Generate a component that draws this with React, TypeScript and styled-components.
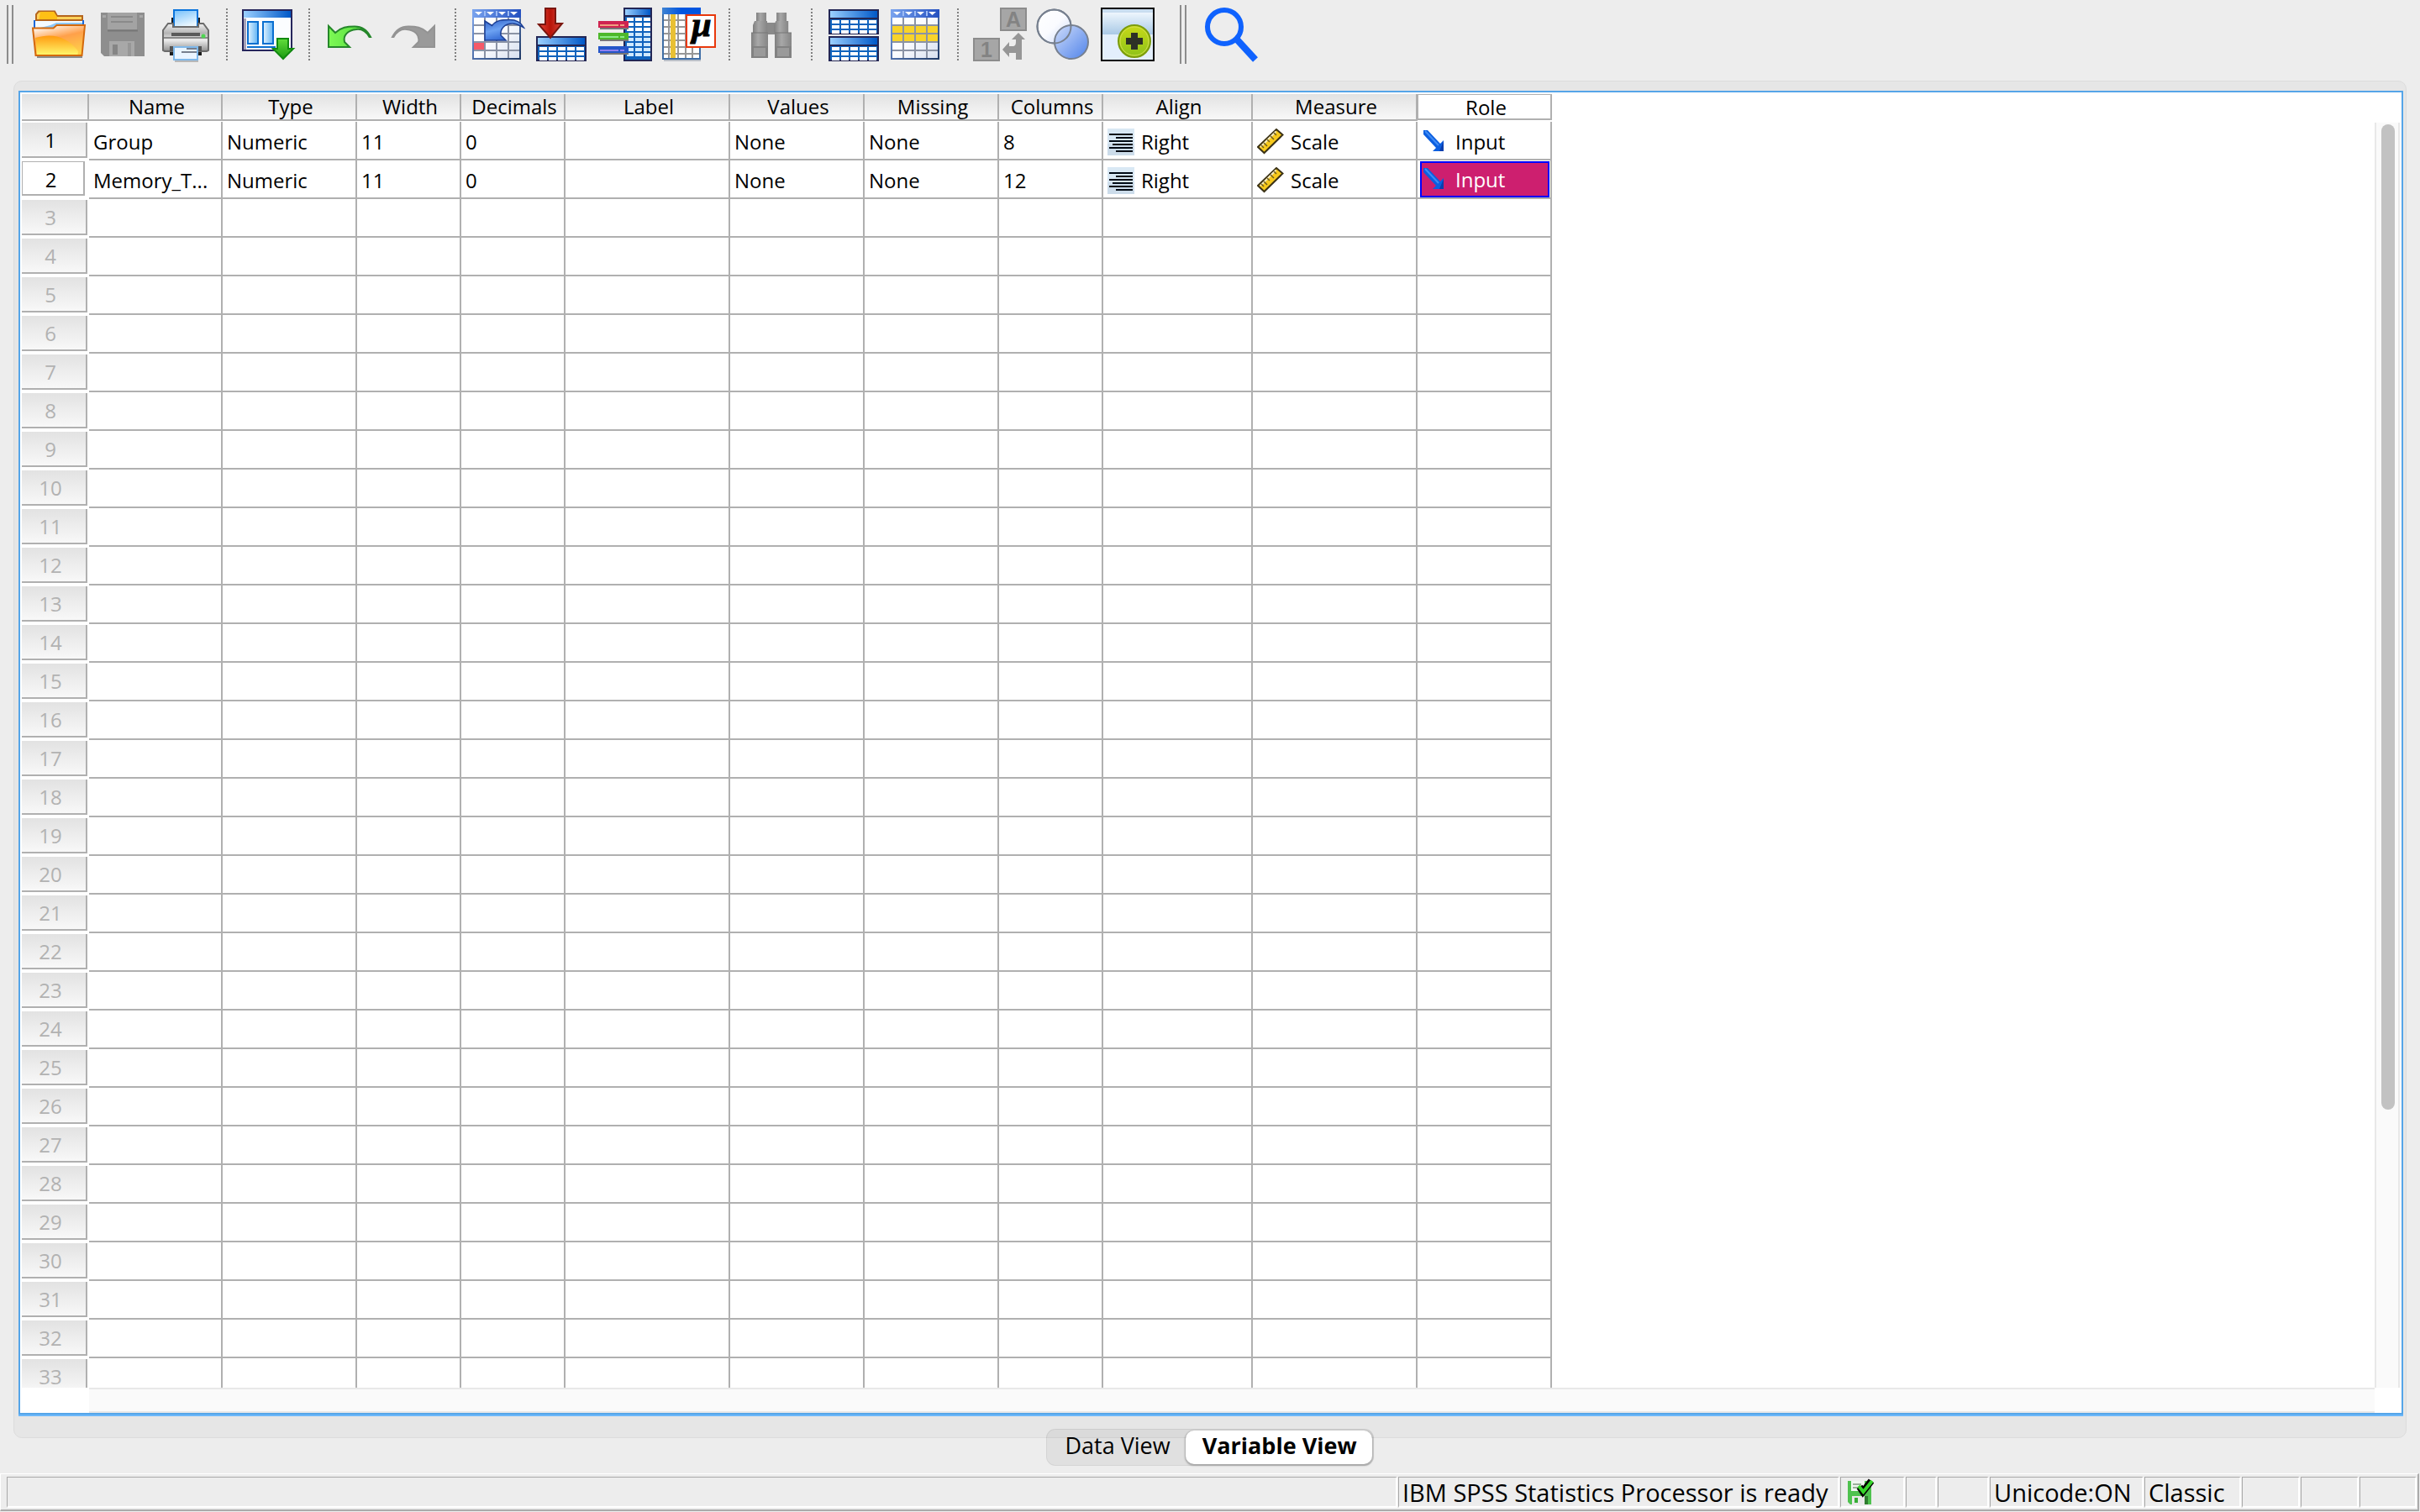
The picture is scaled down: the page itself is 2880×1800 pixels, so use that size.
import React, { useState } from "react";
import styled, { createGlobalStyle, css } from "styled-components";

const line = "#b0b0b0";
const fontStack = '"Open Sans", "Noto Sans", sans-serif';

const GlobalStyle = createGlobalStyle`
  *, *::before, *::after { box-sizing: border-box; }
  body { margin: 0; background: #ededed; color: #000; font-family: ${fontStack}; }
  button { font-family: inherit; }
`;

const Window = styled.div`
  display: flex;
  flex-direction: column;
  height: 100vh;
  overflow: hidden;
`;

/* ---------- toolbar ---------- */

const Toolbar = styled.div`
  display: flex;
  align-items: center;
  gap: 12px;
  padding: 6px 8px 20px;
`;

const Grip = styled.div<{ $inner?: boolean }>`
  width: 8px;
  height: 70px;
  margin-right: 10px;
  margin-left: ${(p) => (p.$inner ? "18px" : "0")};
  border: solid #8c8c8c;
  border-width: 0 2px;
`;

const Separator = styled.div`
  width: 2px;
  height: 62px;
  margin: 0 5px 0 3px;
  background: repeating-linear-gradient(#808080 0 2px, transparent 2px 4px);
`;

const ToolButton = styled.button`
  width: 64px;
  height: 64px;
  padding: 0;
  border: 0;
  background: none;
  svg { display: block; overflow: visible; }
`;

/* ---------- editor panel ---------- */

const Panel = styled.main`
  flex: 1;
  min-height: 0;
  display: flex;
  margin: 0 16px;
  padding: 11px 3px 27px 5px;
  border: 1px solid #dcdcdc;
  border-radius: 10px;
  background: #e6e6e6;
`;

const Frame = styled.div`
  flex: 1;
  display: flex;
  flex-direction: column;
  min-width: 0;
  padding: 0 2px;
  border: 2px solid #55a5e8;
  box-shadow: 0 2px 0 #6cb8fa;
  background: #fff;
`;

const GridRow = styled.div`
  flex: 1;
  display: flex;
  min-height: 0;
`;

const GridArea = styled.div`
  flex: 1;
  min-width: 0;
  padding-top: 2px;
  overflow: hidden;
`;

const VerticalTrack = styled.div`
  width: 30px;
  margin-top: 36px;
  padding: 2px 4px 0 6px;
  border: solid #e8e8e8;
  border-width: 0 2px;
  background: #fafafa;
`;

const Thumb = styled.div`
  height: 78%;
  border-radius: 8px;
  background: #c2c2c2;
`;

const HorizontalTrack = styled.div`
  height: 30px;
  margin: 0 30px 0 80px;
  border: solid #e8e8e8;
  border-width: 2px 0;
  background: #fafafa;
`;

const Table = styled.table`
  width: 1821px;
  table-layout: fixed;
  border-collapse: separate;
  border-spacing: 0;
  font-size: 24px;
  line-height: 30px;
`;

const headerFill = css`
  background: linear-gradient(#e2e2e2, #ececec 45%, #f8f8f8);
`;

const ColumnHeader = styled.th`
  height: 33px;
  padding: 0 0 1px;
  font-weight: 400;
  text-align: center;
  vertical-align: top;
`;

const ColumnLabel = styled.div<{ $active?: boolean }>`
  height: 32px;
  padding-left: 4px;
  border: solid ${line};
  border-width: 0 2px 2px 0;
  ${headerFill}
  ${(p) =>
    p.$active &&
    css`
      height: 31px;
      border-width: 1px 2px 2px 1px;
      background: #fff;
    `}
`;

const RowHeader = styled.th`
  height: 46px;
  padding: 1px 2px 3px 0;
  font-weight: 400;
  vertical-align: top;
`;

const RowLabel = styled.div<{ $filled: boolean; $active: boolean }>`
  height: 42px;
  padding: 6px 8px 0 0;
  border: solid ${line};
  border-width: 0 2px 2px 0;
  color: ${(p) => (p.$filled ? "#000" : "#b2b2b2")};
  ${headerFill}
  ${(p) =>
    p.$active &&
    css`
      height: 41px;
      margin-right: 3px;
      padding-right: 5px;
      border-width: 1px 2px 2px 1px;
      background: #fff;
    `}
`;

const Cell = styled.td`
  height: 46px;
  padding: 0;
  border: solid ${line};
  border-width: 0 2px 2px 0;
`;

const CellContent = styled.div<{ $selected?: boolean }>`
  display: flex;
  align-items: center;
  gap: 8px;
  height: 44px;
  padding: 3px 0 0 5px;
  white-space: nowrap;
  svg { flex: none; }
  ${(p) =>
    p.$selected &&
    css`
      height: 43px;
      margin: 1px 1px 0 3px;
      padding: 1px 0 0;
      border: 2px solid #0000ff;
      background: #cd1f6f;
      color: #fff;
    `}
`;

/* ---------- view tabs ---------- */

const Tabs = styled.div`
  position: relative;
  display: flex;
  align-self: center;
  margin: -11px 0 9px;
  padding: 1px;
  border: 1px solid rgba(0, 0, 0, 0.06);
  border-radius: 11px;
  background: rgba(0, 0, 0, 0.05);
`;

const Tab = styled.button<{ $active: boolean }>`
  height: 40px;
  padding: 0 18px 4px 20px;
  border: 0;
  border-radius: 10px;
  background: none;
  font-size: 27px;
  line-height: 36px;
  color: #000;
  ${(p) =>
    p.$active &&
    css`
      background: #fff;
      font-weight: 700;
      box-shadow: 0 1px 2px 1px rgba(0, 0, 0, 0.25);
    `}
`;

/* ---------- status bar ---------- */

const StatusBar = styled.footer`
  display: flex;
  gap: 1px;
  margin: 0 1px 1px 0;
  padding: 3px 1px 2px 7px;
  border: solid;
  border-width: 1px 2px 2px 1px;
  border-color: #fff #ababab #ababab #fff;
`;

const StatusCell = styled.div<{ $width?: number }>`
  ${(p) => (p.$width ? `width: ${p.$width}px;` : "flex: 1;")}
  height: 37px;
  padding: 0 0 0 4px;
  border: solid;
  border-width: 1px 2px 2px 1px;
  border-color: #a9a9a9 #fff #fff #a9a9a9;
  font-size: 29px;
  line-height: 36px;
  white-space: nowrap;
  svg { display: block; margin: 1px 0 0 3px; }
`;

/* ---------- toolbar icons ---------- */

const Svg = ({ children }: { children: React.ReactNode }) => (
  <svg width="64" height="64" viewBox="0 0 64 64" aria-hidden="true">
    {children}
  </svg>
);

const range = (n: number) => Array.from({ length: n }, (_, i) => i);

const WhiteCells = ({ x, y, cols, rows, w, h, gx, gy }: { x: number; y: number; cols: number; rows: number; w: number; h: number; gx: number; gy: number }) => (
  <>
    {range(rows).map((r) =>
      range(cols).map((c) => (
        <rect key={`${r}-${c}`} x={x + c * (w + gx)} y={y + r * (h + gy)} width={w} height={h} fill={r > 2 ? "#cfe9ff" : "#fff"} />
      ))
    )}
  </>
);

const DefsHolder = styled.svg`
  position: absolute;
`;

const SharedDefs = () => (
  <DefsHolder width="0" height="0" aria-hidden="true">
    <defs>
      <linearGradient id="blueBar"><stop offset="0" stopColor="#9bd0ff" /><stop offset="1" stopColor="#0058c8" /></linearGradient>
      <linearGradient id="folderFront" x1="0.2" y1="0" x2="0.6" y2="1"><stop offset="0" stopColor="#fff" /><stop offset="0.45" stopColor="#ffa04a" /><stop offset="1" stopColor="#ffd04a" /></linearGradient>
      <linearGradient id="folderGlow" x1="0" y1="0" x2="0" y2="1"><stop offset="0" stopColor="#ff9a10" /><stop offset="1" stopColor="#fff56a" /></linearGradient>
      <linearGradient id="paperBlue" x1="0" y1="0" x2="0.4" y2="1"><stop offset="0" stopColor="#74c0fb" /><stop offset="1" stopColor="#eaf7ff" /></linearGradient>
      <linearGradient id="metal" x1="0" y1="0" x2="0" y2="1"><stop offset="0" stopColor="#efefef" /><stop offset="0.35" stopColor="#b4b4b4" /><stop offset="0.6" stopColor="#ececec" /><stop offset="1" stopColor="#8f8f8f" /></linearGradient>
      <linearGradient id="pane"><stop offset="0" stopColor="#e3f4ff" /><stop offset="1" stopColor="#5fb2f4" /></linearGradient>
      <linearGradient id="greenArrow" x1="0" y1="0" x2="0" y2="1"><stop offset="0" stopColor="#62dd3c" /><stop offset="1" stopColor="#1b9a10" /></linearGradient>
      <linearGradient id="undoGreen"><stop offset="0" stopColor="#7dfa55" /><stop offset="1" stopColor="#4fd43a" /></linearGradient>
      <linearGradient id="caseHeader" x1="0" y1="0" x2="1" y2="0"><stop offset="0" stopColor="#79a3ee" /><stop offset="1" stopColor="#2450c0" /></linearGradient>
      <linearGradient id="caseFrame" x1="0" y1="0" x2="1" y2="1"><stop offset="0" stopColor="#7ea6ee" /><stop offset="1" stopColor="#203a66" /></linearGradient>
      <linearGradient id="caseBody" x1="0" y1="0" x2="1" y2="1"><stop offset="0" stopColor="#fff" /><stop offset="0.5" stopColor="#fbfcff" /><stop offset="1" stopColor="#d7dfef" /></linearGradient>
      <linearGradient id="blueArrow" x1="0" y1="0" x2="0.5" y2="1"><stop offset="0" stopColor="#2d5fc8" /><stop offset="0.5" stopColor="#6da2f2" /><stop offset="1" stopColor="#2c62cf" /></linearGradient>
      <linearGradient id="redArrow"><stop offset="0" stopColor="#e8473a" /><stop offset="0.5" stopColor="#b81408" /><stop offset="1" stopColor="#d9463c" /></linearGradient>
      <linearGradient id="muHeader"><stop offset="0" stopColor="#3f83d2" /><stop offset="0.5" stopColor="#0055e0" /><stop offset="1" stopColor="#0055e0" /></linearGradient>
      <linearGradient id="grayTube"><stop offset="0" stopColor="#7f7f7f" /><stop offset="0.4" stopColor="#a8a8a8" /><stop offset="1" stopColor="#858585" /></linearGradient>
      <linearGradient id="venn1" x1="0" y1="0" x2="1" y2="1"><stop offset="0" stopColor="#fff" /><stop offset="0.5" stopColor="#fafbff" /><stop offset="1" stopColor="#c9d8f8" /></linearGradient>
      <linearGradient id="venn2" x1="0" y1="0" x2="1" y2="1"><stop offset="0" stopColor="#cfdcfa" /><stop offset="1" stopColor="#4f83ea" /></linearGradient>
      <linearGradient id="sky" x1="0" y1="0" x2="0" y2="1"><stop offset="0" stopColor="#eef6fd" /><stop offset="1" stopColor="#a9c9e6" /></linearGradient>
      <linearGradient id="lime" x1="0" y1="0" x2="0" y2="1"><stop offset="0" stopColor="#c8d918" /><stop offset="1" stopColor="#8dc21a" /></linearGradient>
    </defs>
  </DefsHolder>
);

const OpenIcon = () => (
  <Svg>
    <path d="M6 59h54" stroke="#8c8c8c" strokeWidth="2" />
    <path d="M5 30V8l3-3.500h19l3 5.500h30v14" fill="#ffd25a" stroke="#b5651d" strokeWidth="2" />
    <path d="M10 5h16l4 6v5H8z" fill="#ffc016" />
    <path d="M3 15v14M61 15v14" stroke="#1a66d8" strokeWidth="2" />
    <path d="M4 15h56v10H4z" fill="#f4faff" />
    <path d="M4 15h56" stroke="#b5651d" strokeWidth="2" />
    <path d="M22 21l7-3h31v3H29l-4 3H10z" fill="#8fc8f8" />
    <path d="M1 24.500h24.500l4-3.500H63l-3.500 36H4.500z" fill="url(#folderFront)" stroke="#d4690c" strokeWidth="2" />
    <path d="M4 36c20-6 38-2 51 16l-.5 4H6z" fill="url(#folderGlow)" />
  </Svg>
);

const SaveIcon = () => (
  <Svg>
    <path d="M6 6h52v52H10l-4-4z" fill="#8e8e8e" />
    <path d="M14 6h35v20H14z" fill="#a3a3a3" />
    <path d="M18 11h26M18 17h26" stroke="#8a8a8a" strokeWidth="2" />
    <path d="M14 27.500h36" stroke="#777" strokeWidth="2" />
    <path d="M16 40h30v18H16z" fill="#a8a8a8" />
    <path d="M20 44h6v12h-6z" fill="#858585" />
    <path d="M38 42h4v16h-4z" fill="#979797" />
    <path d="M8 9h4v3H8zM52 9h4v3h-4z" fill="#a8a8a8" />
  </Svg>
);

const PrintIcon = () => (
  <Svg>
    <path d="M14 12h34v10H14zM12 52h38v5H12z" fill="#1d1d1d" />
    <path d="M17 3h28v20H17z" fill="url(#paperBlue)" stroke="#0a74dc" strokeWidth="2" />
    <path d="M10 19h6v4h30v-4h6l6 8v24l-2 1H6l-2-1V27z" fill="url(#metal)" stroke="#6b6b6b" strokeWidth="2" />
    <path d="M14 30h34v4H14z" fill="#5a5a5a" />
    <path d="M5 36h52" stroke="#8a8a8a" strokeWidth="2" />
    <circle cx="52" cy="34" r="2.500" fill="#4fd552" />
    <path d="M12 46h38v6H12z" fill="#555" />
    <path d="M17 47h28v15H17z" fill="#eaf5ff" stroke="#7fb8ea" strokeWidth="2" />
    <path d="M32 49h12M26 53h18" stroke="#77808e" strokeWidth="2" />
    <path d="M18 64h28" stroke="#b8b8b8" strokeWidth="2" />
  </Svg>
);

const RecallIcon = () => (
  <Svg>
    <rect x="1" y="3" width="58" height="48" fill="#fbfdff" stroke="#26265c" strokeWidth="2" />
    <path d="M2 4h56v8H2z" fill="url(#blueBar)" />
    <path d="M2 13h3v37H2z" fill="#a6a2b8" />
    <rect x="7" y="17" width="12" height="26" fill="url(#pane)" stroke="#0a6fd0" strokeWidth="2" />
    <rect x="25" y="17" width="12" height="26" fill="url(#pane)" stroke="#0a6fd0" strokeWidth="2" />
    <path d="M6 47h34" stroke="#0a6fd0" strokeWidth="2" />
    <path d="M42 37h13v12h6L49 61 37 49h5z" fill="url(#greenArrow)" stroke="#128a10" strokeWidth="2" />
  </Svg>
);

const arrowPath = "M5 22v25h25l-6-6c-2-8 4-14 14-15 7-1 12 3 15.500 9h1.500c-4-8-11-12.500-19-12.500-9 0-16 1-23 7.500z";

const UndoIcon = () => (
  <Svg><path d={arrowPath} fill="url(#undoGreen)" stroke="#25872a" strokeWidth="2" /></Svg>
);

const RedoIcon = () => (
  <Svg><path d={arrowPath} transform="matrix(-1 0 0 1 60 0)" fill="#9a9a9a" stroke="#939393" strokeWidth="2" /></Svg>
);

const CaseTable = ({ highlight }: { highlight?: boolean }) => (
  <>
    <rect x="1" y="3" width="56" height="58" fill="url(#caseBody)" stroke="url(#caseFrame)" strokeWidth="2" />
    <path d="M0 2h58v10H0z" fill="url(#caseHeader)" />
    {highlight && <path d="M2 22h54v18H2z" fill="#f8d32a" />}
    <path d="M2 21h54M2 31h54M2 41h54M2 51h54M15 12v48M29 12v48M43 12v48" stroke="#8b93a5" strokeWidth="2" fill="none" />
    <path d="M15 4v6M29 4v6M43 4v6" stroke="#9dbcf5" strokeWidth="2" />
    <path d="M3 5h9l-4.500 4zM17 5h9l-4.500 4zM31 5h9l-4.500 4zM45 5h9l-4.500 4z" fill="#fff" />
  </>
);

const GoToCaseIcon = () => (
  <Svg>
    <g transform="translate(2 0)">
      <CaseTable />
      <path d="M2 42h12v8H2z" fill="#f55a68" />
    </g>
    <path d="M17 16v23h25l-6-6c-1-8 5-14 14-14 6 0 9 3 13.500 5-4-7-11-9.500-17-9.500-8 0-16 0-21 7z" fill="url(#blueArrow)" stroke="#1d3f94" strokeWidth="1.500" />
  </Svg>
);

const DataTable = ({ y, height, rows }: { y: number; height: number; rows: number }) => (
  <>
    <rect x="3" y={y + 1} width="58" height={height - 2} fill="#0f63bd" stroke="#222655" strokeWidth="2" />
    <path d={`M4 ${y + 2}h56v8H4z`} fill="url(#blueBar)" />
    <path d={`M3 ${y + 11}h58`} stroke="#222655" strokeWidth="2" />
    <WhiteCells x={6} y={y + 13} cols={5} rows={rows} w={9} h={4} gx={2} gy={2} />
  </>
);

const GoToVariableIcon = () => (
  <Svg>
    <DataTable y={34} height={30} rows={3} />
    <path d="M13 1h12v18h8L19 36 5 20h8z" fill="url(#redArrow)" stroke="#7a160f" strokeWidth="2" />
  </Svg>
);

const VariablesIcon = () => (
  <Svg>
    <rect x="31" y="1" width="32" height="62" fill="#0f63bd" stroke="#222655" strokeWidth="2" />
    <path d="M32 2h30v7H32z" fill="url(#blueBar)" />
    <path d="M31 10h32" stroke="#222655" strokeWidth="2" />
    <WhiteCells x={34} y={12} cols={3} rows={8} w={8} h={4} gx={2} gy={2} />
    {[
      [16, "#cf2450", "#f0a080"],
      [30, "#4db82b", "#8bea88"],
      [46, "#2556c8", "#8f80f0"],
    ].map(([y, base, shine]) => (
      <g key={String(y)}>
        <path d={`M2 ${Number(y) + 9}h34`} stroke="#777" strokeWidth="2" />
        <rect x="0" y={Number(y)} width="36" height="8" fill={String(base)} />
        <path d={`M2 ${Number(y) + 5}h22M26 ${Number(y) + 5}h5`} stroke={String(shine)} strokeWidth="2" />
      </g>
    ))}
  </Svg>
);

const StatisticsIcon = () => (
  <Svg>
    <path d="M2 63h44" stroke="#b9bfc8" strokeWidth="2" />
    <rect x="1" y="1" width="44" height="60" fill="#fff" stroke="#3f6ea6" strokeWidth="2" />
    <path d="M2 15h42M2 23h42M2 31h42M2 39h42M2 47h42M2 55h42M8 8v52M19 8v52M28 8v52M36 8v52" stroke="#979797" strokeWidth="2" />
    <path d="M10 8h6v52h-6z" fill="#e8c034" />
    <path d="M0 0h46v8H0z" fill="url(#muHeader)" />
    <rect x="29" y="9" width="34" height="38" fill="#fff" stroke="#e8380c" strokeWidth="2" />
    <text x="47" y="34" textAnchor="middle" fontFamily="Liberation Serif, serif" fontStyle="italic" fontWeight="700" fontSize="42" stroke="#000" strokeWidth="1">μ</text>
  </Svg>
);

const FindIcon = () => (
  <Svg>
    <path d="M26 18h12v14H26z" fill="#8a8a8a" />
    {[0, 28].map((dx) => (
      <g key={dx}>
        <path d={`M${14 + dx * 0.86} 6h12v10h-12z`} fill="url(#grayTube)" />
        <path d={`M${12 + dx * 0.9} 16h15v14h-17v-9z`} fill="url(#grayTube)" />
        <path d={`M${8 + dx} 30h20v30h-20z`} fill="url(#grayTube)" />
        <path d={`M${8 + dx} 46h20v14h-20z`} fill="#828282" />
        <path d={`M${11 + dx} 48h14v10h-14z`} fill="#9a9a9a" />
      </g>
    ))}
    <path d="M8 30h20M36 30h20" stroke="#767676" strokeWidth="1" />
  </Svg>
);

const SplitIcon = () => (
  <Svg>
    <DataTable y={2} height={30} rows={3} />
    <DataTable y={34} height={30} rows={3} />
  </Svg>
);

const SelectIcon = () => <Svg><CaseTable highlight /></Svg>;

const ValueLabelsIcon = () => (
  <Svg>
    <rect x="33" y="1" width="30" height="26" fill="#a6a6a6" stroke="#8c8c8c" strokeWidth="2" />
    <rect x="1" y="37" width="30" height="26" fill="#a6a6a6" stroke="#8c8c8c" strokeWidth="2" />
    <g fill="#838383" fontFamily="Liberation Sans, sans-serif" fontWeight="700" fontSize="25" textAnchor="middle">
      <text x="48" y="23">A</text>
      <text x="16" y="59">1</text>
    </g>
    <path d="M54 30l8 8h-4v24h-7v-8h-8v5l-8-9 8-9v5h4c3 0 4-2 4-5v-3h-5z" fill="#969696" />
  </Svg>
);

const SetsIcon = () => (
  <Svg>
    <circle cx="20.500" cy="22.500" r="20" fill="url(#venn1)" stroke="#77808f" strokeWidth="2" />
    <circle cx="41" cy="41" r="20" fill="url(#venn2)" stroke="#77808f" strokeWidth="2" />
    <circle cx="20.500" cy="22.500" r="20" fill="none" stroke="#77808f" strokeWidth="2" />
  </Svg>
);

const AddOnIcon = () => (
  <Svg>
    <rect x="1" y="1" width="62" height="62" fill="#e3effc" stroke="#000" strokeWidth="2" />
    <path d="M2 6h60v26H2z" fill="url(#sky)" />
    <path d="M2 2h60v4H2z" fill="#c9ddf0" />
    <circle cx="40" cy="40" r="19" fill="url(#lime)" stroke="#7c9c0c" strokeWidth="2" />
    <circle cx="40" cy="40" r="17" fill="none" stroke="#d3e04e" strokeWidth="1" />
    <path d="M36 30h8v6h6v8h-6v6h-8v-6h-6v-8h6z" fill="#2d3026" />
  </Svg>
);

const SearchIcon = () => (
  <Svg>
    <circle cx="23" cy="23" r="20" fill="none" stroke="#0f62fe" strokeWidth="6" />
    <path d="M38 38l22 24" stroke="#0f62fe" strokeWidth="8" />
  </Svg>
);

/* ---------- cell icons ---------- */

const AlignIcon = () => (
  <svg width="32" height="32" viewBox="0 0 32 32" aria-hidden="true">
    <path d="M0 0h32v32H0z" fill="#d9e8f4" />
    <path d="M0 18h32v14H0z" fill="#ccdcea" />
    <path d="M2 7h28M10 11h20M2 15h28M6 19h24M2 23h28M10 27h20" stroke="#000a14" strokeWidth="2" />
  </svg>
);

const ScaleIcon = () => (
  <svg width="32" height="32" viewBox="0 0 32 32" aria-hidden="true">
    <path d="M23 1l7.500 6.500L8.500 29 1 22z" fill="#f7c91c" stroke="#3b3216" strokeWidth="2" />
    <path d="M22.500 3.500L4 22" stroke="#f3eac2" strokeWidth="2" />
    <path d="M20 5l3 3M16 9l4 4M12 13l3 3M8 17l4 4M5 20l3 3" stroke="#6d5a1e" strokeWidth="1.500" />
  </svg>
);

const InputIcon = () => (
  <svg width="32" height="32" viewBox="0 0 32 32" aria-hidden="true">
    <path d="M2 2h5l15 16 4-4v13H13l4-4L2 7z" fill="#0c5fe0" />
    <path d="M4 3l16 17" stroke="#3f8cf5" strokeWidth="2" />
    <path d="M26 15v12h-5z" fill="#0a3fae" />
  </svg>
);

const SavedIcon = () => (
  <svg width="32" height="32" viewBox="0 0 32 32" aria-hidden="true">
    <path d="M1 3h28v28H4l-3-3z" fill="#4fc24f" />
    <path d="M5 3h16v12H5z" fill="#f0f6f0" />
    <path d="M7 7h10M7 11h10" stroke="#9ab09a" strokeWidth="2" />
    <path d="M6 21h18v10H6z" fill="#e8e8e8" />
    <path d="M9 23h4v6H9z" fill="#35ad35" />
    <path d="M21 21h4v10h-4z" fill="#2f7d2f" />
    <path d="M15 10l4 6 10-13" fill="none" stroke="#000" strokeWidth="8" />
    <path d="M14 9l5.500 7L30 3" fill="none" stroke="#37d52b" strokeWidth="4" />
  </svg>
);

/* ---------- data ---------- */

type Tool = { label: string; icon: React.ReactNode };

const toolGroups: Tool[][] = [
  [
    { label: "Open data document", icon: <OpenIcon /> },
    { label: "Save this document", icon: <SaveIcon /> },
    { label: "Print", icon: <PrintIcon /> },
  ],
  [{ label: "Recall recently used dialogs", icon: <RecallIcon /> }],
  [
    { label: "Undo", icon: <UndoIcon /> },
    { label: "Redo", icon: <RedoIcon /> },
  ],
  [
    { label: "Go to case", icon: <GoToCaseIcon /> },
    { label: "Go to variable", icon: <GoToVariableIcon /> },
    { label: "Variables", icon: <VariablesIcon /> },
    { label: "Run descriptive statistics", icon: <StatisticsIcon /> },
  ],
  [{ label: "Find", icon: <FindIcon /> }],
  [
    { label: "Split file", icon: <SplitIcon /> },
    { label: "Select cases", icon: <SelectIcon /> },
  ],
  [
    { label: "Value labels", icon: <ValueLabelsIcon /> },
    { label: "Use variable sets", icon: <SetsIcon /> },
    { label: "Customize toolbar", icon: <AddOnIcon /> },
  ],
];

const columns = [
  { name: "Name", width: 159 },
  { name: "Type", width: 160 },
  { name: "Width", width: 124 },
  { name: "Decimals", width: 124 },
  { name: "Label", width: 196 },
  { name: "Values", width: 160 },
  { name: "Missing", width: 160 },
  { name: "Columns", width: 124 },
  { name: "Align", width: 178 },
  { name: "Measure", width: 196 },
  { name: "Role", width: 160 },
];

const variables = [
  ["Group", "Numeric", "11", "0", "", "None", "None", "8", "Right", "Scale", "Input"],
  ["Memory_T...", "Numeric", "11", "0", "", "None", "None", "12", "Right", "Scale", "Input"],
];

const cellIcons: Record<string, React.ReactNode> = {
  Align: <AlignIcon />,
  Measure: <ScaleIcon />,
  Role: <InputIcon />,
};

const ROWS = 33;
const ACTIVE_ROW = 1;
const ACTIVE_COLUMN = "Role";

export default function App() {
  const [view, setView] = useState("Variable View");
  return (
    <>
      <GlobalStyle />
      <SharedDefs />
      <Window>
        <Toolbar role="toolbar" aria-label="Main">
          <Grip />
          {toolGroups.map((group, i) => (
            <React.Fragment key={i}>
              {i > 0 && <Separator />}
              {group.map((tool) => (
                <ToolButton key={tool.label} type="button" aria-label={tool.label}>
                  {tool.icon}
                </ToolButton>
              ))}
            </React.Fragment>
          ))}
          <Grip $inner />
          <ToolButton type="button" aria-label="Search"><SearchIcon /></ToolButton>
        </Toolbar>

        <Panel>
          <Frame>
            <GridRow>
              <GridArea>
                <Table>
                  <colgroup>
                    <col width={80} />
                    {columns.map((c) => <col key={c.name} width={c.width} />)}
                  </colgroup>
                  <thead>
                    <tr>
                      <ColumnHeader><ColumnLabel /></ColumnHeader>
                      {columns.map((c) => (
                        <ColumnHeader key={c.name} scope="col">
                          <ColumnLabel $active={c.name === ACTIVE_COLUMN}>{c.name}</ColumnLabel>
                        </ColumnHeader>
                      ))}
                    </tr>
                  </thead>
                  <tbody>
                    {range(ROWS).map((r) => (
                      <tr key={r}>
                        <RowHeader scope="row">
                          <RowLabel $filled={r < variables.length} $active={r === ACTIVE_ROW}>{r + 1}</RowLabel>
                        </RowHeader>
                        {columns.map((c, i) => {
                          const value = variables[r]?.[i];
                          return (
                            <Cell key={c.name}>
                              {value && (
                                <CellContent $selected={r === ACTIVE_ROW && c.name === ACTIVE_COLUMN}>
                                  {cellIcons[c.name]}
                                  <span>{value}</span>
                                </CellContent>
                              )}
                            </Cell>
                          );
                        })}
                      </tr>
                    ))}
                  </tbody>
                </Table>
              </GridArea>
              <VerticalTrack><Thumb /></VerticalTrack>
            </GridRow>
            <HorizontalTrack />
          </Frame>
        </Panel>

        <Tabs role="tablist">
          {["Data View", "Variable View"].map((name) => (
            <Tab key={name} type="button" role="tab" aria-selected={view === name} $active={view === name} onClick={() => setView(name)}>
              {name}
            </Tab>
          ))}
        </Tabs>

        <StatusBar>
          <StatusCell />
          <StatusCell $width={525}>IBM SPSS Statistics Processor is ready</StatusCell>
          <StatusCell $width={77}><SavedIcon /></StatusCell>
          <StatusCell $width={37} />
          <StatusCell $width={61} />
          <StatusCell $width={183}>Unicode:ON</StatusCell>
          <StatusCell $width={115}>Classic</StatusCell>
          <StatusCell $width={69} />
          <StatusCell $width={69} />
          <StatusCell $width={68} />
        </StatusBar>
      </Window>
    </>
  );
}
